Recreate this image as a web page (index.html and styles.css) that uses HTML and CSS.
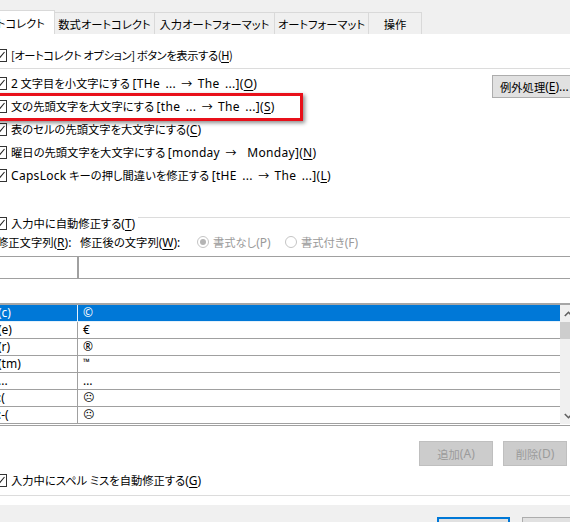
FILE: index.html
```html
<!DOCTYPE html>
<html lang="ja">
<head>
<meta charset="utf-8">
<title>オートコレクト</title>
<link rel="stylesheet" href="styles.css">
</head>
<body>
<div class="tabs">
  <div class="tab active"><span>オートコレクト</span></div>
  <div class="tab t2">数式オートコレクト</div>
  <div class="tab t3">入力オートフォーマット</div>
  <div class="tab t4">オートフォーマット</div>
  <div class="tab t5">操作</div>
</div>
<div class="panel">
  <div class="chk first">
    <svg class="cb" viewBox="0 0 13 13"><rect x="0.5" y="0.5" width="12" height="12" fill="#fff" stroke="#333"/><path d="M2.5 7 L5 9.5 L10.5 3" fill="none" stroke="#222" stroke-width="1.1"/></svg>
    <span class="tight">[オートコレクト オプション] ボタンを表示する(<u>H</u>)</span>
  </div>
  <div class="sep"></div>
  <div class="opts">
    <div class="optlist">
      <div class="chk row">
        <svg class="cb" viewBox="0 0 13 13"><rect x="0.5" y="0.5" width="12" height="12" fill="#fff" stroke="#333"/><path d="M2.5 7 L5 9.5 L10.5 3" fill="none" stroke="#222" stroke-width="1.1"/></svg>
        <span><span class="en">2</span> 文字目を小文字にする <span class="en wide">[THe ... <span class="arr">→</span> The ...](<u>O</u>)</span></span>
      </div>
      <div class="chk row hlrow">
        <svg class="cb" viewBox="0 0 13 13"><rect x="0.5" y="0.5" width="12" height="12" fill="#fff" stroke="#333"/><path d="M2.5 7 L5 9.5 L10.5 3" fill="none" stroke="#222" stroke-width="1.1"/></svg>
        <span>文の先頭文字を大文字にする <span class="en wide">[the ... <span class="arr">→</span> The ...](<u>S</u>)</span></span>
        <div class="highlight"></div>
      </div>
      <div class="chk row">
        <svg class="cb" viewBox="0 0 13 13"><rect x="0.5" y="0.5" width="12" height="12" fill="#fff" stroke="#333"/><path d="M2.5 7 L5 9.5 L10.5 3" fill="none" stroke="#222" stroke-width="1.1"/></svg>
        <span>表のセルの先頭文字を大文字にする<span class="en">(<u>C</u>)</span></span>
      </div>
      <div class="chk row">
        <svg class="cb" viewBox="0 0 13 13"><rect x="0.5" y="0.5" width="12" height="12" fill="#fff" stroke="#333"/><path d="M2.5 7 L5 9.5 L10.5 3" fill="none" stroke="#222" stroke-width="1.1"/></svg>
        <span>曜日の先頭文字を大文字にする <span class="en wide">[monday <span class="arr">→</span> &nbsp;Monday](<u>N</u>)</span></span>
      </div>
      <div class="chk row">
        <svg class="cb" viewBox="0 0 13 13"><rect x="0.5" y="0.5" width="12" height="12" fill="#fff" stroke="#333"/><path d="M2.5 7 L5 9.5 L10.5 3" fill="none" stroke="#222" stroke-width="1.1"/></svg>
        <span><span class="en wide">CapsLock</span> キーの押し間違いを修正する <span class="en wide">[tHE ... <span class="arr">→</span> The ...](<u>L</u>)</span></span>
      </div>
    </div>
    <div class="btn exc">例外処理<span class="en">(<u>E</u>)...</span></div>
  </div>

  <div class="chk grp">
    <svg class="cb" viewBox="0 0 13 13"><rect x="0.5" y="0.5" width="12" height="12" fill="#fff" stroke="#333"/><path d="M2.5 7 L5 9.5 L10.5 3" fill="none" stroke="#222" stroke-width="1.1"/></svg>
    <span>入力中に自動修正する<span class="en">(<u>T</u>)</span></span>
    <div class="gline"></div>
  </div>

  <div class="labels">
    <span class="l1">修正文字列<span class="en">(<u>R</u>):</span></span>
    <span class="l2">修正後の文字列<span class="en">(<u>W</u>):</span></span>
    <span class="radio r1">
      <svg class="rd" viewBox="0 0 12 12"><circle cx="6" cy="6" r="5.5" fill="#fff" stroke="#c4c4c4"/><circle cx="6" cy="6" r="3" fill="#b4b4b4"/></svg>
      <span>書式なし<span class="en">(P)</span></span>
    </span>
    <span class="radio r2">
      <svg class="rd" viewBox="0 0 12 12"><circle cx="6" cy="6" r="5.5" fill="#fff" stroke="#c4c4c4"/></svg>
      <span>書式付き<span class="en">(F)</span></span>
    </span>
  </div>

  <div class="inputs">
    <div class="in1"></div>
    <div class="in2"></div>
  </div>

  <div class="list">
    <div class="rows">
      <div class="item sel"><span class="c1"><span>(c)</span></span><span class="c2">©</span></div>
      <div class="item"><span class="c1"><span>(e)</span></span><span class="c2">€</span></div>
      <div class="item"><span class="c1"><span>(r)</span></span><span class="c2">®</span></div>
      <div class="item"><span class="c1"><span>(tm)</span></span><span class="c2 tm">™</span></div>
      <div class="item"><span class="c1"><span>...</span></span><span class="c2">…</span></div>
      <div class="item"><span class="c1"><span>:(</span></span><span class="c2 sym">☹</span></div>
      <div class="item"><span class="c1"><span>:-(</span></span><span class="c2 sym">☹</span></div>
    </div>
    <div class="scroll">
      <div class="arrow"><svg viewBox="0 0 9 6" class="chev"><path d="M0.8 5 L4.5 1.3 L8.2 5" fill="none" stroke="#606060" stroke-width="1.6"/></svg></div>
      <div class="thumb"></div>
      <div class="track"></div>
      <div class="arrow"><svg viewBox="0 0 9 6" class="chev"><path d="M0.8 1 L4.5 4.7 L8.2 1" fill="none" stroke="#606060" stroke-width="1.6"/></svg></div>
    </div>
  </div>

  <div class="btnrow">
    <div class="btn dis add">追加<span class="en">(A)</span></div>
    <div class="btn dis del">削除<span class="en">(D)</span></div>
  </div>

  <div class="chk spell">
    <svg class="cb" viewBox="0 0 13 13"><rect x="0.5" y="0.5" width="12" height="12" fill="#fff" stroke="#333"/><path d="M2.5 7 L5 9.5 L10.5 3" fill="none" stroke="#222" stroke-width="1.1"/></svg>
    <span>入力中にスペル ミスを自動修正する<span class="en">(<u>G</u>)</span></span>
  </div>
  <div class="sep sep2"></div>
</div>
<div class="footer">
  <div class="btn ok"></div>
  <div class="btn cancel"></div>
</div>
</body>
</html>
```
FILE: styles.css
```css
html, body {
  margin: 0;
  padding: 0;
  overflow: hidden;
}
body {
  width: 570px;
  height: 522px;
  background: #fff;
  color: #000;
  font-family: "Noto Sans CJK JP", "Noto Sans", sans-serif;
  font-size: 11.3px;
  line-height: 16px;
  font-feature-settings: "palt" 1;
}
.en {
  font-family: "Noto Sans", "Noto Sans CJK JP", sans-serif;
  font-size: 12px;
}
.en.wide {
  letter-spacing: 0.3px;
  word-spacing: 2px;
}
.tight { letter-spacing: -0.4px; }
.arr {
  font-family: "Noto Sans CJK JP", sans-serif;
  font-feature-settings: normal;
  font-size: 11px;
  letter-spacing: 0;
}
u { text-decoration: underline; text-underline-offset: 2px; }

.tabs {
  height: 34px;
  background: #f0f0f0;
  display: flex;
  align-items: flex-end;
}
.tab {
  flex: none;
  box-sizing: border-box;
  height: 22px;
  border: 1px solid #d9d9d9;
  border-left: none;
  border-bottom: none;
  display: flex;
  align-items: center;
  justify-content: center;
  white-space: nowrap;
  background: #f0f0f0;
}
.tab.active {
  width: 55px;
  height: 24px;
  background: #fff;
  justify-content: flex-end;
  overflow: hidden;
  padding-right: 9px;
}
.tab.active span { flex: none; }
.t2 { width: 100px; }
.t3 { width: 120px; }
.t4 { width: 94px; }
.t5 { width: 53px; }

.panel { width: 570px; }

.chk {
  display: flex;
  align-items: center;
  margin-left: -6px;
  white-space: nowrap;
}
.cb {
  flex: none;
  width: 13px;
  height: 13px;
  margin-right: 4px;
}
.first { margin-top: 13px; height: 16px; }

.sep {
  height: 1px;
  background: #dcdcdc;
  margin-top: 5px;
}

.opts {
  display: flex;
  margin-top: 3px;
}
.optlist { flex: none; width: 492px; }
.row { height: 23px; }
.hlrow { position: relative; }
.highlight {
  position: absolute;
  top: -2px;
  left: -4px;
  width: 307px;
  height: 22px;
  border: 3px solid #e8101a;
  box-shadow: 2px 2px 4px rgba(0, 0, 0, 0.45);
}

.btn {
  flex: none;
  box-sizing: border-box;
  display: flex;
  align-items: center;
  white-space: nowrap;
}
.exc {
  margin-top: 3px;
  width: 90px;
  height: 23px;
  border: 1px solid #adadad;
  background: #e1e1e1;
  padding-left: 7px;
}

.grp {
  margin-top: 28px;
  height: 16px;
}
.gline {
  flex: 1;
  align-self: flex-start;
  height: 1px;
  margin-top: 2px;
  margin-left: 3px;
  margin-right: -6px;
  background: #dcdcdc;
}

.labels {
  margin-top: 3px;
  height: 16px;
  display: flex;
  align-items: center;
  white-space: nowrap;
}
.l1 { flex: none; width: 83px; margin-left: -3px; }
.l2 { flex: none; width: 117px; }
.radio {
  flex: none;
  display: flex;
  align-items: center;
  color: #9a9a9a;
}
.r1 { width: 88px; }
.rd { width: 12px; height: 12px; margin-right: 4px; }

.inputs {
  margin-top: 6px;
  height: 23px;
  box-sizing: border-box;
  border-top: 1px solid #a0a0a0;
  border-bottom: 1px solid #a0a0a0;
  display: flex;
}
.in1 {
  flex: none;
  width: 79px;
  box-sizing: border-box;
  border-right: 2px solid #a0a0a0;
}
.in2 { flex: 1; }

.list {
  margin-top: 24px;
  display: flex;
  border-top: 2px solid #a6a6a6;
  border-bottom: 1px solid #a0a0a0;
  padding-bottom: 1px;
}
.rows { flex: none; width: 560px; }
.item {
  height: 17px;
  box-sizing: border-box;
  border-bottom: 1px solid #a0a0a0;
  display: grid;
  grid-template-columns: 78px 1fr;
  line-height: 16px;
  font-family: "Noto Sans", "DejaVu Sans", sans-serif;
  font-size: 12px;
}
.c1 {
  border-right: 1px solid #a0a0a0;
  overflow: hidden;
  white-space: nowrap;
}
.c1 span { display: inline-block; margin-left: -2px; }
.c2 { padding-left: 5px; }
.c2.tm { font-size: 9px; line-height: 12px; }
.c2.sym { font-family: "DejaVu Sans", sans-serif; font-size: 11px; }
.item.sel {
  background: #0078d7;
  color: #fff;
  border-bottom-color: #e5f1fb;
}
.item.sel .c1 { border-right-color: #e5f1fb; }

.scroll {
  flex: none;
  width: 17px;
  background: #f0f0f0;
  display: flex;
  flex-direction: column;
}
.arrow {
  height: 17px;
  display: flex;
  align-items: center;
  justify-content: center;
}
.chev { width: 9px; height: 6px; }
.thumb { height: 17px; background: #cdcdcd; }
.track { flex: 1; }

.btnrow {
  margin-top: 15px;
  display: flex;
  padding-left: 419px;
  gap: 10px;
}
.dis {
  height: 25px;
  justify-content: center;
  border: 1px solid #bfbfbf;
  background: #cccccc;
  color: #9b9b9b;
}
.add { width: 74px; }
.del { width: 64px; }

.spell { margin-top: 6px; height: 16px; }
.sep2 { margin-top: 7px; }

.footer {
  margin-top: 9px;
  height: 40px;
  background: #f0f0f0;
  display: flex;
  padding-left: 437px;
  padding-top: 12px;
  gap: 12px;
}
.ok {
  width: 73px;
  height: 23px;
  border: 2px solid #0078d7;
  background: #e1e1e1;
}
.cancel {
  width: 75px;
  height: 23px;
  border: 1px solid #adadad;
  background: #e1e1e1;
}
```
